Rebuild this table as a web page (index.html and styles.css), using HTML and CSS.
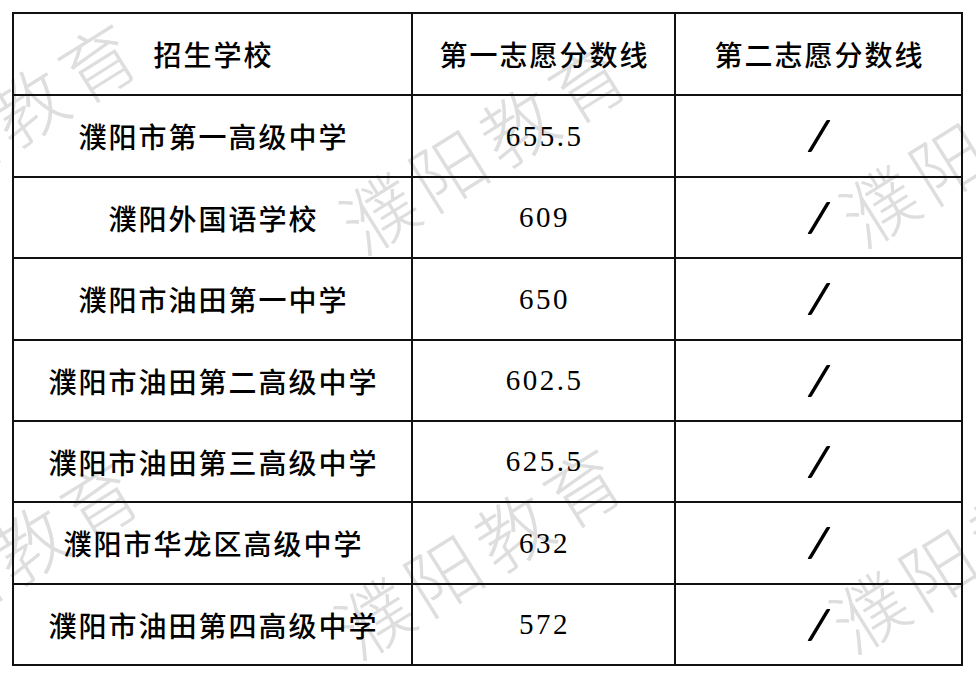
FILE: index.html
```html
<!DOCTYPE html>
<html lang="zh-CN">
<head>
<meta charset="utf-8">
<title>濮阳市招生学校分数线</title>
<link rel="stylesheet" href="styles.css">
</head>
<body>
<div class="page">
  <div class="watermarks" aria-hidden="true">
    <span class="wm wm-tl">濮阳教育</span>
    <span class="wm wm-tc">濮阳教育</span>
    <span class="wm wm-tr">濮阳教育</span>
    <span class="wm wm-bl">濮阳教育</span>
    <span class="wm wm-bc">濮阳教育</span>
    <span class="wm wm-br">濮阳教育</span>
  </div>
  <div class="table">
    <div class="cell cjk">招生学校</div>
    <div class="cell cjk">第一志愿分数线</div>
    <div class="cell cjk">第二志愿分数线</div>

    <div class="cell cjk">濮阳市第一高级中学</div>
    <div class="cell num">655.5</div>
    <div class="cell"><span class="slash"></span></div>

    <div class="cell cjk">濮阳外国语学校</div>
    <div class="cell num">609</div>
    <div class="cell"><span class="slash"></span></div>

    <div class="cell cjk">濮阳市油田第一中学</div>
    <div class="cell num">650</div>
    <div class="cell"><span class="slash"></span></div>

    <div class="cell cjk">濮阳市油田第二高级中学</div>
    <div class="cell num">602.5</div>
    <div class="cell"><span class="slash"></span></div>

    <div class="cell cjk">濮阳市油田第三高级中学</div>
    <div class="cell num">625.5</div>
    <div class="cell"><span class="slash"></span></div>

    <div class="cell cjk">濮阳市华龙区高级中学</div>
    <div class="cell num">632</div>
    <div class="cell"><span class="slash"></span></div>

    <div class="cell cjk">濮阳市油田第四高级中学</div>
    <div class="cell num">572</div>
    <div class="cell"><span class="slash"></span></div>
  </div>
</div>
</body>
</html>
```

FILE: styles.css
```css
html, body {
  margin: 0;
  padding: 0;
  background: #ffffff;
}

.page {
  position: relative;
  width: 976px;
  height: 678px;
  overflow: hidden;
  padding: 12px 0 0 12px;
  box-sizing: border-box;
}

.watermarks {
  position: absolute;
  inset: 0;
  pointer-events: none;
}

.wm {
  position: absolute;
  transform: translate(-50%, -50%) rotate(-32deg);
  font-family: "Noto Sans CJK SC", sans-serif;
  font-weight: 300;
  font-size: 74px;
  letter-spacing: 8px;
  line-height: 1;
  color: #dedede;
  white-space: nowrap;
}

.wm-tl { left: -5px; top: 123px; }
.wm-tc { left: 485px; top: 143px; }
.wm-tr { left: 985px; top: 136px; }
.wm-bl { left: -3px; top: 561px; }
.wm-bc { left: 480px; top: 548px; }
.wm-br { left: 975px; top: 542px; }

.table {
  position: relative;
  display: grid;
  grid-template-columns: 399px 263px 287px;
  grid-template-rows: 82px 82px 81px 82px 81px 81px 82px 81px;
  width: 951px;
  border-top: 2px solid #111;
  border-left: 2px solid #111;
  box-sizing: border-box;
}

.cell {
  display: flex;
  align-items: center;
  justify-content: center;
  border-right: 2px solid #111;
  border-bottom: 2px solid #111;
  box-sizing: border-box;
  color: #000;
}

.cjk {
  font-family: "Noto Sans CJK SC", sans-serif;
  font-weight: 500;
  font-size: 28px;
  letter-spacing: 2px;
  padding-left: 2px;
}

.num {
  font-family: "Liberation Serif", serif;
  font-size: 29px;
  letter-spacing: 2.5px;
  padding-left: 2px;
}

.slash {
  display: block;
  width: 4px;
  height: 32px;
  background: #000;
  border-radius: 1px;
  transform: skewX(-31deg);
}
```
